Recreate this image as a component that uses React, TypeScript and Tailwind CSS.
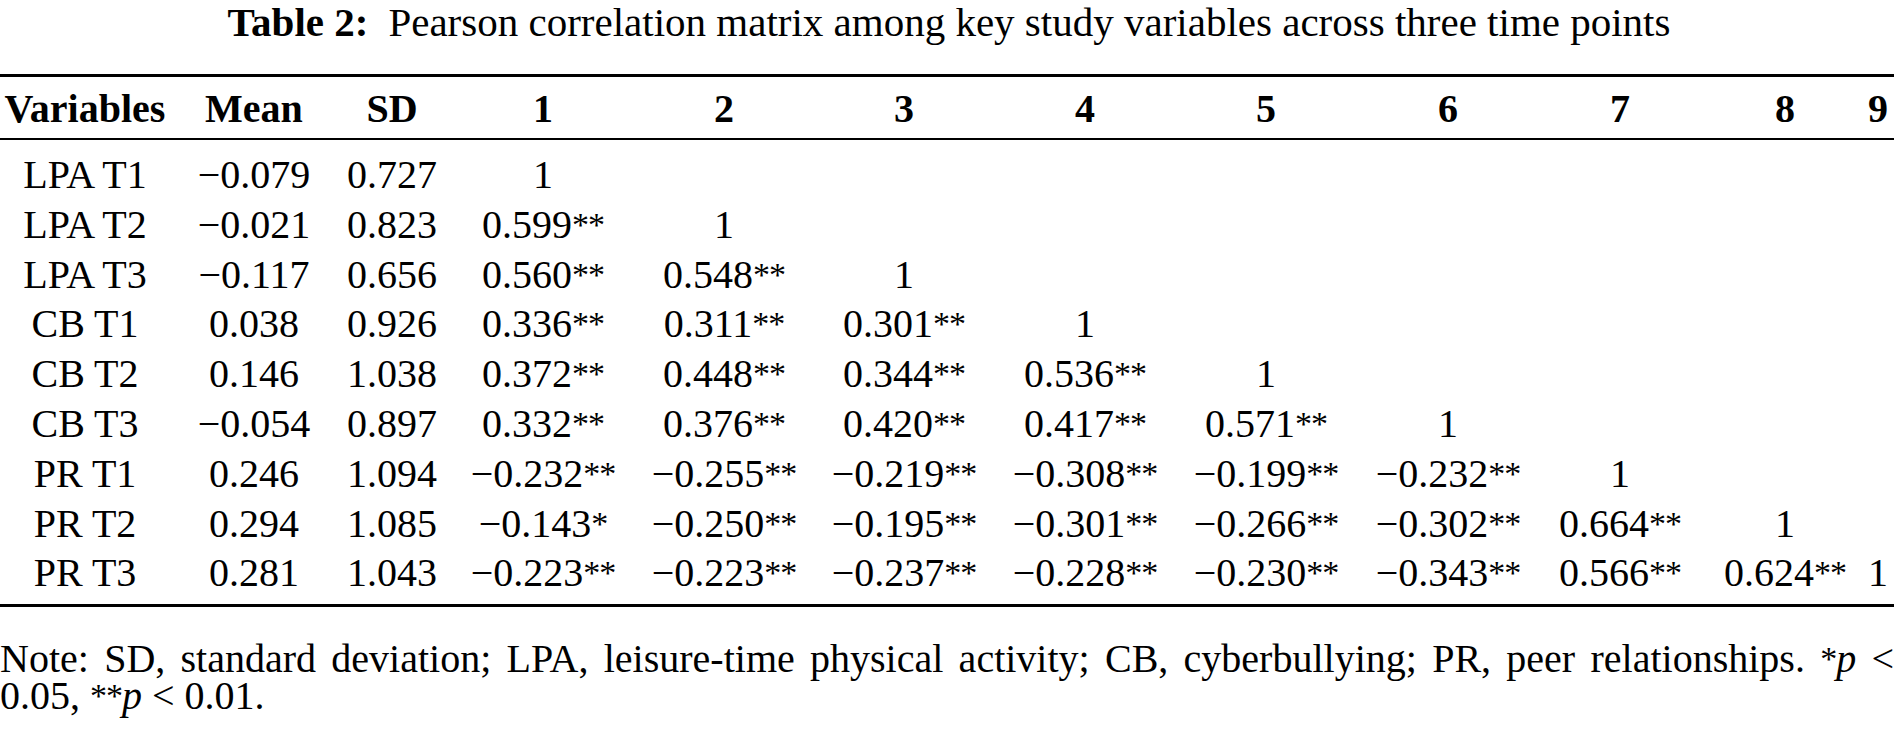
import React from "react";

const cols = "grid grid-cols-[170px_168px_108px_194px_168px_192px_170px_192px_172px_172px_158px_30px]";

const Star = ({ n }: { n: number }) => (
  <span className="relative -top-[2px] text-[34px] tracking-[-1px]">{"*".repeat(n)}</span>
);

function Cell({ v }: { v: string }) {
  const m = v.match(/^(.*?)(\*+)$/);
  if (m) {
    return (
      <>
        {m[1]}
        <Star n={m[2].length} />
      </>
    );
  }
  return <>{v}</>;
}

const rows: string[][] = [
  ["LPA T1", "−0.079", "0.727", "1"],
  ["LPA T2", "−0.021", "0.823", "0.599**", "1"],
  ["LPA T3", "−0.117", "0.656", "0.560**", "0.548**", "1"],
  ["CB T1", "0.038", "0.926", "0.336**", "0.311**", "0.301**", "1"],
  ["CB T2", "0.146", "1.038", "0.372**", "0.448**", "0.344**", "0.536**", "1"],
  ["CB T3", "−0.054", "0.897", "0.332**", "0.376**", "0.420**", "0.417**", "0.571**", "1"],
  ["PR T1", "0.246", "1.094", "−0.232**", "−0.255**", "−0.219**", "−0.308**", "−0.199**", "−0.232**", "1"],
  ["PR T2", "0.294", "1.085", "−0.143*", "−0.250**", "−0.195**", "−0.301**", "−0.266**", "−0.302**", "0.664**", "1"],
  ["PR T3", "0.281", "1.043", "−0.223**", "−0.223**", "−0.237**", "−0.228**", "−0.230**", "−0.343**", "0.566**", "0.624**", "1"],
];

const headers = ["Variables", "Mean", "SD", "1", "2", "3", "4", "5", "6", "7", "8", "9"];

export default function App() {
  return (
    <div className="w-[1898px] h-[732px] bg-white text-black font-['Liberation_Serif',serif] text-[40px] overflow-hidden">
      <div className="h-[44px] leading-[44px] text-center whitespace-nowrap text-[41px]">
        <span className="font-bold">Table 2:</span>
        <span className="ml-[20px]">Pearson correlation matrix among key study variables across three time points</span>
      </div>
      <div className="mt-[30px] w-[1894px] border-t-[3px] border-b-[3px] border-black">
        <div className={`${cols} h-[63px] leading-[63px] font-bold border-b-2 border-black`}>
          {headers.map((h, i) => (
            <div key={i} className={i === 11 ? "text-right pr-[6px]" : "text-center whitespace-nowrap"}>
              {h}
            </div>
          ))}
        </div>
        <div className="pt-[10px] pb-[6px]">
          {rows.map((r, ri) => (
            <div key={ri} className={`${cols} h-[49.8px] leading-[49.8px]`}>
              {Array.from({ length: 12 }).map((_, ci) => (
                <div
                  key={ci}
                  className={ci === 11 ? "text-right pr-[6px] whitespace-nowrap" : "text-center whitespace-nowrap"}
                >
                  {r[ci] ? <Cell v={r[ci]} /> : null}
                </div>
              ))}
            </div>
          ))}
        </div>
      </div>
      <p className="mt-[34px] w-[1894px] leading-[35px] text-justify">
        Note: SD, standard deviation; LPA, leisure-time physical activity; CB, cyberbullying; PR, peer relationships.{" "}
        <Star n={1} />
        <i>p</i> &lt; 0.05, <Star n={2} />
        <i>p</i> &lt; 0.01.
      </p>
    </div>
  );
}
